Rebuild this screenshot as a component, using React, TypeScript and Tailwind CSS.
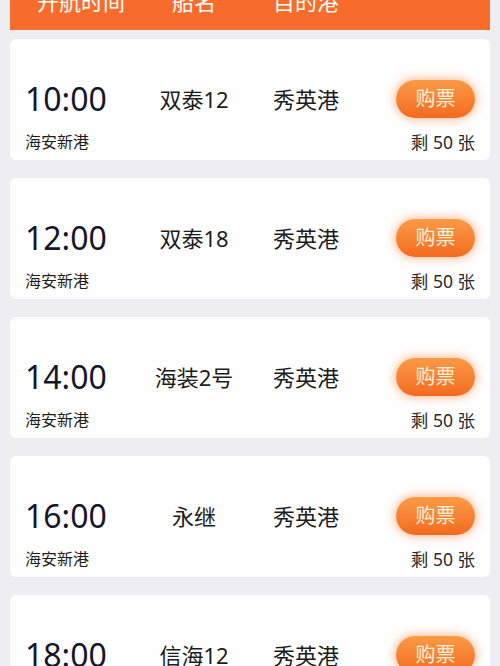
const sailings = [
    { time: '10:00', ship: '双泰12', dest: '秀英港', from: '海安新港', left: 50 },
    { time: '12:00', ship: '双泰18', dest: '秀英港', from: '海安新港', left: 50 },
    { time: '14:00', ship: '海装2号', dest: '秀英港', from: '海安新港', left: 50 },
    { time: '16:00', ship: '永继', dest: '秀英港', from: '海安新港', left: 50 },
    { time: '18:00', ship: '信海12', dest: '秀英港', from: '海安新港', left: 50 },
]

const font = { fontFamily: '"Noto Sans", "Noto Sans CJK SC", sans-serif' }

export default function App() {
    return (
        <div className="min-h-[666px] w-[500px] overflow-hidden bg-[#eeeef2] px-[10px]" style={font}>
            {/* Header */}
            <div className="-mt-[27px] flex h-[57px] items-center bg-[#f76c2b] text-[22px] text-white">
                <div className="w-[128px] pl-[14px] text-center">开航时间</div>
                <div className="w-[112px] text-center">船名</div>
                <div className="w-[112px] text-center">目的港</div>
            </div>

            {/* List */}
            <div className="mt-[9px] flex flex-col gap-[18px]">
                {sailings.map((s) => (
                    <div key={s.time} className="flex h-[121px] shrink-0 flex-col rounded-md bg-[#fefefe] px-[15px] pt-[41px]">
                        <div className="flex h-[38px] items-center">
                            <div className="w-[113px] text-[32px] leading-none text-[#16162a]">{s.time}</div>
                            <div className="w-[112px] text-center text-[22px] text-[#1c1c1c]">{s.ship}</div>
                            <div className="w-[112px] text-center text-[22px] text-[#1c1c1c]">{s.dest}</div>
                            <button className="ml-auto h-[38px] w-[79px] rounded-full bg-gradient-to-b from-[#fb9a45] to-[#f26a1e] text-[20px] text-[#fff1dc] shadow-[0_0_8px_2px_rgba(247,120,40,0.45)]">
                                购票
                            </button>
                        </div>
                        <div className="mt-[11px] flex items-center justify-between">
                            <span className="text-[16px] text-[#1e1e1e]">{s.from}</span>
                            <span className="text-[17.5px] text-[#2a2a2a]">剩 {s.left} 张</span>
                        </div>
                    </div>
                ))}
            </div>
        </div>
    )
}
